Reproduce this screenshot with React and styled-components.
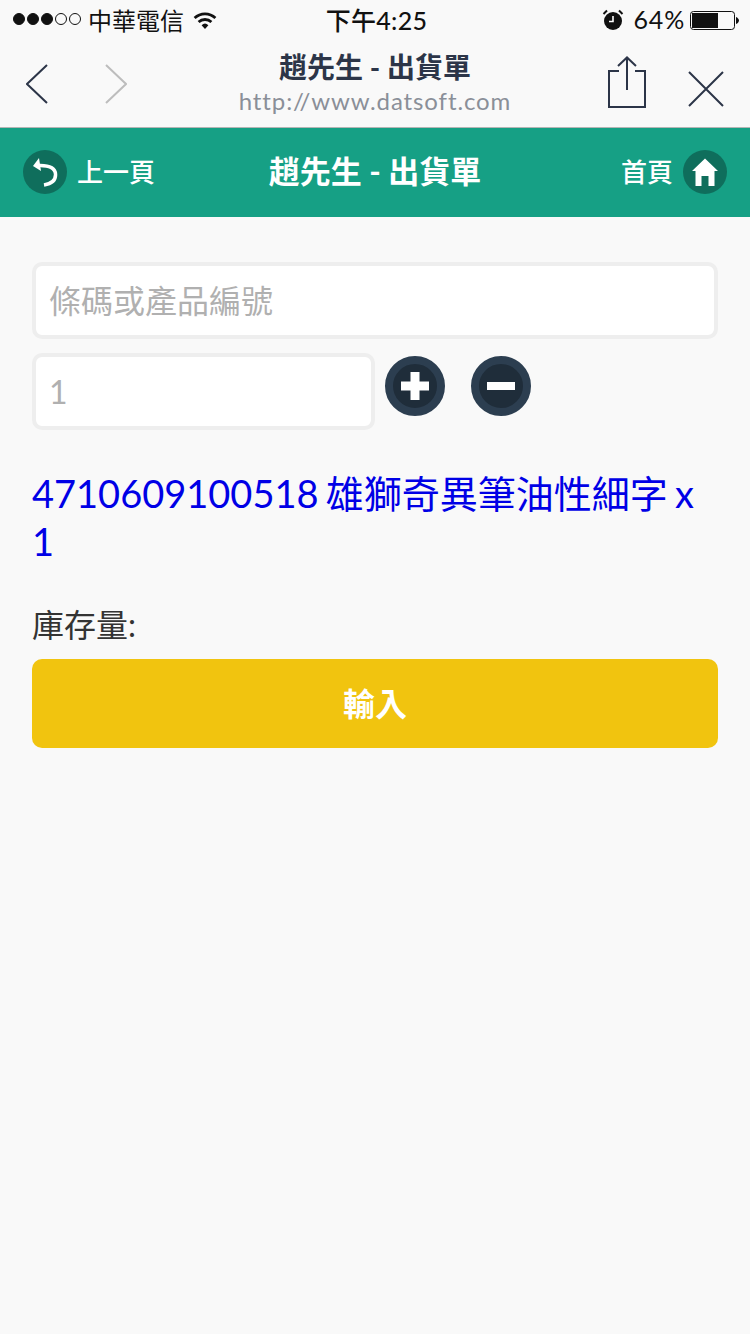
import React from "react";
import styled, { createGlobalStyle } from "styled-components";

const GlobalStyle = createGlobalStyle`
  html, body {
    margin: 0;
    padding: 0;
    background: #f9f9f9;
    font-family: Lato, "Noto Sans CJK TC", sans-serif;
  }
  * { box-sizing: border-box; }
`;

const Page = styled.div`
  width: 750px;
  min-height: 1334px;
  background: #f9f9f9;
`;

const StatusBar = styled.div`
  height: 40px;
  padding: 0 10px 2px 13px;
  display: grid;
  grid-template-columns: 1fr auto 1fr;
  align-items: center;
  color: #111;
  font-size: 24px;
`;

const StatusLeft = styled.div`
  display: flex;
  align-items: center;
`;

const StatusRight = styled.div`
  display: flex;
  align-items: center;
  justify-content: flex-end;
`;

const Signal = styled.div`
  display: flex;
  gap: 2px;
  margin-right: 7px;
`;

const Dot = styled.span`
  width: 12px;
  height: 12px;
  border-radius: 50%;
  border: 1px solid #111;
  background: ${(p) => (p.$on ? "#111" : "transparent")};
`;

const Time = styled.div`
  font-size: 25px;
  font-weight: 500;
  letter-spacing: 0.3px;
`;

const Percent = styled.span`
  font-size: 25px;
  letter-spacing: 0.8px;
  margin: 0 5px 0 9px;
`;

const WifiIcon = styled.svg`
  margin: 3px 0 0 8px;
`;

const AlarmIcon = styled.svg`
  margin: 2px 1px 0 0;
`;

const BatteryIcon = styled.svg`
  margin-top: 4px;
`;

const NavBar = styled.div`
  height: 88px;
  padding: 0 26px;
  display: grid;
  grid-template-columns: 1fr auto 1fr;
  align-items: start;
  border-bottom: 1px solid #b5b5b5;
`;

const NavGroup = styled.div`
  display: flex;
  align-items: center;
  gap: ${(p) => p.$gap}px;
  padding-top: ${(p) => p.$top}px;
  justify-content: ${(p) => (p.$right ? "flex-end" : "flex-start")};
`;

const CloseIcon = styled.svg`
  margin-top: 14px;
`;

const NavTitle = styled.div`
  display: flex;
  flex-direction: column;
  align-items: center;
`;

const NavHeading = styled.div`
  color: #2c3548;
  font-size: 28px;
  font-weight: 700;
  line-height: 34px;
  margin-top: 10px;
`;

const NavUrl = styled.div`
  color: #8a8f98;
  font-size: 24px;
  line-height: 34px;
  letter-spacing: 0.9px;
`;

const HeaderBar = styled.div`
  height: 89px;
  padding: 0 23px 1px;
  background: #16a085;
  color: #fff;
  display: grid;
  grid-template-columns: 1fr auto 1fr;
  align-items: center;
  font-weight: 500;
`;

const HeaderLink = styled.div`
  display: flex;
  align-items: center;
  gap: 10px;
  font-size: 26px;
  line-height: 44px;
  justify-content: ${(p) => (p.$right ? "flex-end" : "flex-start")};
`;

const HeaderTitle = styled.div`
  font-size: 31px;
  font-weight: 700;
  line-height: 40px;
  margin-top: -2px;
`;

const RoundIcon = styled.div`
  width: 44px;
  height: 44px;
  border-radius: 50%;
  background: #0f6e5c;
  display: flex;
  align-items: center;
  justify-content: center;
`;

const Content = styled.div`
  padding: 45px 32px 0;
`;

const Field = styled.input`
  display: block;
  width: ${(p) => p.$width}px;
  height: 77px;
  padding: 0 13px;
  border: 4px solid #eeeeee;
  border-radius: 10px;
  background: #fff;
  font-family: inherit;
  font-size: 32px;
  color: #333;
  outline: none;
  &::placeholder {
    color: #b0b0b0;
    opacity: 1;
  }
`;

const QuantityRow = styled.div`
  display: flex;
  align-items: flex-start;
  margin-top: 14px;
`;

const RoundButton = styled.button`
  width: 60px;
  height: 60px;
  padding: 0;
  margin: 3px 0 0 ${(p) => p.$left}px;
  border-radius: 50%;
  border: 8px solid #2c3e50;
  background: #1f2d3a;
  display: flex;
  align-items: center;
  justify-content: center;
`;

const ItemLine = styled.div`
  margin-top: 39px;
  color: #0000e6;
  font-size: 38px;
  line-height: 48px;
  word-spacing: -2.5px;
`;

const StockLabel = styled.div`
  margin-top: 36px;
  color: #333;
  font-size: 32px;
  line-height: 48px;
`;

const SubmitButton = styled.button`
  display: block;
  width: 100%;
  height: 89px;
  margin-top: 10px;
  padding-bottom: 4px;
  border: none;
  border-radius: 10px;
  background: #f1c40f;
  color: #fff;
  font-family: inherit;
  font-size: 32px;
  font-weight: 700;
`;

export default function App() {
  return (
    <Page>
      <GlobalStyle />
      <StatusBar>
        <StatusLeft>
          <Signal>
            <Dot $on />
            <Dot $on />
            <Dot $on />
            <Dot />
            <Dot />
          </Signal>
          中華電信
          <WifiIcon width="26" height="20" viewBox="0 0 26 20">
            <path d="M13 18 L9.6 14.2 A5 5 0 0 1 16.4 14.2 Z" fill="#111" />
            <path d="M6.6 11 A9.4 9.4 0 0 1 19.4 11" fill="none" stroke="#111" strokeWidth="2.8" />
            <path d="M2.6 7 A15 15 0 0 1 23.4 7" fill="none" stroke="#111" strokeWidth="2.8" />
          </WifiIcon>
        </StatusLeft>
        <Time>下午4:25</Time>
        <StatusRight>
          <AlarmIcon width="22" height="22" viewBox="0 0 22 22">
            <circle cx="11" cy="12" r="9" fill="#111" />
            <path d="M11 7 V12.5 H7" fill="none" stroke="#fff" strokeWidth="1.6" />
            <path d="M1.5 5 L5 1.5 M20.5 5 L17 1.5" stroke="#111" strokeWidth="2" />
          </AlarmIcon>
          <Percent>64%</Percent>
          <BatteryIcon width="50" height="20" viewBox="0 0 50 20">
            <rect x="0.5" y="0.5" width="44" height="18" rx="3" fill="none" stroke="#111" />
            <rect x="2" y="2" width="26" height="15" fill="#111" />
            <path d="M46 6 C47.5 6.5 49 8 49 9.5 C49 11 47.5 12.5 46 13 Z" fill="#111" />
          </BatteryIcon>
        </StatusRight>
      </StatusBar>

      <NavBar>
        <NavGroup $gap={57} $top={24}>
          <svg width="22" height="40" viewBox="0 0 22 40">
            <path d="M21 1 L1 20 L21 39" fill="none" stroke="#2c3548" strokeWidth="2" />
          </svg>
          <svg width="22" height="40" viewBox="0 0 22 40">
            <path d="M1 1 L21 20 L1 39" fill="none" stroke="#bdbdbd" strokeWidth="2" />
          </svg>
        </NavGroup>
        <NavTitle>
          <NavHeading>趙先生 - 出貨單</NavHeading>
          <NavUrl>http://www.datsoft.com</NavUrl>
        </NavTitle>
        <NavGroup $right $gap={42} $top={16}>
          <svg width="38" height="52" viewBox="0 0 38 52">
            <path d="M11 15 H1 V51 H37 V15 H27" fill="none" stroke="#2c3548" strokeWidth="2" />
            <path d="M19 34 V2 M10 10 L19 1.5 L28 10" fill="none" stroke="#2c3548" strokeWidth="2" />
          </svg>
          <CloseIcon width="36" height="36" viewBox="0 0 36 36">
            <path d="M1 1 L35 35 M35 1 L1 35" fill="none" stroke="#2c3548" strokeWidth="2" />
          </CloseIcon>
        </NavGroup>
      </NavBar>

      <HeaderBar>
        <HeaderLink>
          <RoundIcon>
            <svg width="26" height="30" viewBox="0 0 26 30">
              <path d="M5 8.5 C14 8 23 9 23.5 17 C24 24 18 27 12 28" fill="none" stroke="#fff" strokeWidth="3.5" />
              <path d="M7 1 L1 9 L9 14 Z" fill="#fff" />
            </svg>
          </RoundIcon>
          上一頁
        </HeaderLink>
        <HeaderTitle>趙先生 - 出貨單</HeaderTitle>
        <HeaderLink $right>
          首頁
          <RoundIcon>
            <svg width="28" height="28" viewBox="0 0 28 28">
              <path d="M14 0.5 L27 13 H23.5 V28 H17.5 V18 H10.5 V28 H4.5 V13 H1 Z" fill="#fff" />
            </svg>
          </RoundIcon>
        </HeaderLink>
      </HeaderBar>

      <Content>
        <Field $width={686} placeholder="條碼或產品編號" />
        <QuantityRow>
          <Field $width={343} placeholder="1" />
          <RoundButton $left={10} aria-label="增加">
            <svg width="30" height="30" viewBox="0 0 30 30">
              <path d="M10.5 1 H19.5 V10.5 H29 V19.5 H19.5 V29 H10.5 V19.5 H1 V10.5 H10.5 Z" fill="#fff" />
            </svg>
          </RoundButton>
          <RoundButton $left={26} aria-label="減少">
            <svg width="30" height="10" viewBox="0 0 30 10">
              <rect x="1" y="1" width="28" height="8" fill="#fff" />
            </svg>
          </RoundButton>
        </QuantityRow>
        <ItemLine>4710609100518 雄獅奇異筆油性細字 x 1</ItemLine>
        <StockLabel>庫存量:</StockLabel>
        <SubmitButton>輸入</SubmitButton>
      </Content>
    </Page>
  );
}
